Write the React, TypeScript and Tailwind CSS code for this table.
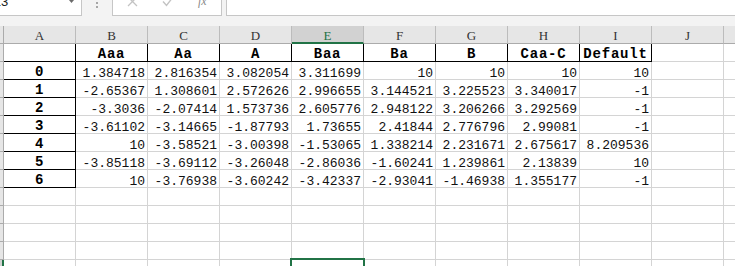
import React from "react";

const COLS = ["A", "B", "C", "D", "E", "F", "G", "H", "I", "J", "K"];
const HEADS = ["Aaa", "Aa", "A", "Baa", "Ba", "B", "Caa-C", "Default"];
const DATA: string[][] = [
  ["1.384718", "2.816354", "3.082054", "3.311699", "10", "10", "10", "10"],
  ["-2.65367", "1.308601", "2.572626", "2.996655", "3.144521", "3.225523", "3.340017", "-1"],
  ["-3.3036", "-2.07414", "1.573736", "2.605776", "2.948122", "3.206266", "3.292569", "-1"],
  ["-3.61102", "-3.14665", "-1.87793", "1.73655", "2.41844", "2.776796", "2.99081", "-1"],
  ["10", "-3.58521", "-3.00398", "-1.53065", "1.338214", "2.231671", "2.675617", "8.209536"],
  ["-3.85118", "-3.69112", "-3.26048", "-2.86036", "-1.60241", "1.239861", "2.13839", "10"],
  ["10", "-3.76938", "-3.60242", "-3.42337", "-2.93041", "-1.46938", "1.355177", "-1"],
];
const EMPTY_ROWS = 5;

const mono = { fontFamily: '"Liberation Mono", "DejaVu Sans Mono", monospace' };

function RowHead({ selected }: { selected?: boolean }) {
  return selected ? (
    <div className="w-[4px] h-[18px] shrink-0 bg-[#d2d2d2] border-r-2 border-r-[#217346] border-b border-b-[#ababab]" />
  ) : (
    <div className="w-[4px] h-[18px] shrink-0 bg-[#e6e6e6] border-r border-b border-[#ababab]" />
  );
}

function GridCell({
  children,
  dark,
  align = "right",
  bold,
}: {
  children?: React.ReactNode;
  dark?: boolean;
  align?: "right" | "center";
  bold?: boolean;
}) {
  return (
    <div
      className={
        "w-[72px] h-[18px] shrink-0 border-r border-b flex items-end " +
        (dark ? "border-black " : "border-[#d4d4d4] ") +
        (align === "center" ? "justify-center" : "justify-end pr-[2px]")
      }
    >
      {children !== undefined &&
        (bold ? (
          <span
            className="text-[14px] font-bold leading-[11px] tracking-[0.8px] text-black whitespace-nowrap pb-[1px]"
            style={mono}
          >
            {children}
          </span>
        ) : (
          <span className="text-[13px] leading-[11px] text-[#111] whitespace-nowrap" style={mono}>
            {children}
          </span>
        ))}
    </div>
  );
}

function FormulaBar() {
  return (
    <div className="h-[16px] flex bg-[#f3f3f3] overflow-hidden">
      {/* name box */}
      <div className="-ml-[20px] w-[102px] h-[16px] shrink-0 bg-white border-r border-b border-[#c6c6c6] flex justify-between">
        <span
          className="pl-[5px] -mt-[5px] text-[13px] leading-[13px] text-[#222]"
          style={{ fontFamily: '"Liberation Sans", Arial, sans-serif' }}
        >
          E13
        </span>
        <svg width="5" height="4" viewBox="0 0 5 4" className="mr-[7px]">
          <path d="M0 0 H5 L2.5 3 Z" fill="#6b6b6b" />
        </svg>
      </div>
      {/* splitter dots */}
      <div className="w-[30px] shrink-0 flex flex-col items-center pt-[2px] gap-[2px]">
        <div className="w-[2px] h-[2px] bg-[#a6a6a6]" />
        <div className="w-[2px] h-[2px] bg-[#a6a6a6]" />
      </div>
      {/* cancel / enter / fx */}
      <div className="w-[110px] h-[16px] shrink-0 bg-white border-l border-r border-b border-[#c6c6c6] flex items-start">
        <svg width="11" height="11" viewBox="0 0 11 11" className="ml-[14px] -mt-[4px]">
          <path d="M1 1 L10 10 M10 1 L1 10" stroke="#c3c3c3" strokeWidth="1.3" fill="none" />
        </svg>
        <svg width="12" height="11" viewBox="0 0 12 11" className="ml-[24px] -mt-[4px]">
          <path d="M1 5.5 L4.5 9.5 L11 1" stroke="#c3c3c3" strokeWidth="1.4" fill="none" />
        </svg>
        <span
          className="ml-[24px] -mt-[5px] text-[12px] leading-[12px] italic text-[#8a8a8a]"
          style={{ fontFamily: '"Liberation Serif", "Times New Roman", serif' }}
        >
          fx
        </span>
      </div>
      <div className="w-[4px] shrink-0" />
      {/* formula input */}
      <div className="flex-1 h-[16px] bg-white border-l border-b border-[#c6c6c6]" />
    </div>
  );
}

export default function App() {
  return (
    <div className="w-[735px] h-[266px] overflow-hidden bg-white relative">
      <FormulaBar />
      <div className="h-[10px] bg-[#f3f3f3]" />

      {/* column headers */}
      <div className="flex bg-[#e6e6e6]">
        <div className="w-[4px] h-[18px] shrink-0 border-r border-b border-[#ababab]" />
        {COLS.map((c) =>
          c === "E" ? (
            <div
              key={c}
              className="w-[72px] h-[18px] shrink-0 bg-[#d2d2d2] border-r border-r-[#bcbcbc] border-b-2 border-b-[#217346] flex items-end justify-center"
            >
              <span
                className="text-[13px] leading-[11px] pb-[1px] text-[#217346]"
                style={{ fontFamily: '"Liberation Serif", serif' }}
              >
                {c}
              </span>
            </div>
          ) : (
            <div
              key={c}
              className="w-[72px] h-[18px] shrink-0 border-r border-r-[#bcbcbc] border-b border-b-[#ababab] flex items-end justify-center"
            >
              {c !== "K" && (
                <span
                  className="text-[13px] leading-[11px] pb-[2px] text-[#333]"
                  style={{ fontFamily: '"Liberation Serif", serif' }}
                >
                  {c}
                </span>
              )}
            </div>
          )
        )}
      </div>

      {/* row 1: field names */}
      <div className="flex">
        <RowHead />
        <GridCell dark />
        {HEADS.map((h) => (
          <GridCell key={h} dark align="center" bold>
            {h}
          </GridCell>
        ))}
        <GridCell />
        <GridCell />
      </div>

      {/* data rows */}
      {DATA.map((row, i) => (
        <div key={i} className="flex">
          <RowHead />
          <GridCell dark align="center" bold>
            {String(i)}
          </GridCell>
          {row.map((v, j) => (
            <GridCell key={j}>{v}</GridCell>
          ))}
          <GridCell />
          <GridCell />
        </div>
      ))}

      {/* empty rows */}
      {Array.from({ length: EMPTY_ROWS }).map((_, i) => (
        <div key={"e" + i} className="flex">
          <RowHead selected={i === EMPTY_ROWS - 1} />
          {COLS.map((c) => (
            <GridCell key={c} />
          ))}
        </div>
      ))}

      {/* active cell outline */}
      <div className="absolute left-[290px] top-[258px] w-[75px] h-[21px] border-2 border-[#217346]" />
    </div>
  );
}
